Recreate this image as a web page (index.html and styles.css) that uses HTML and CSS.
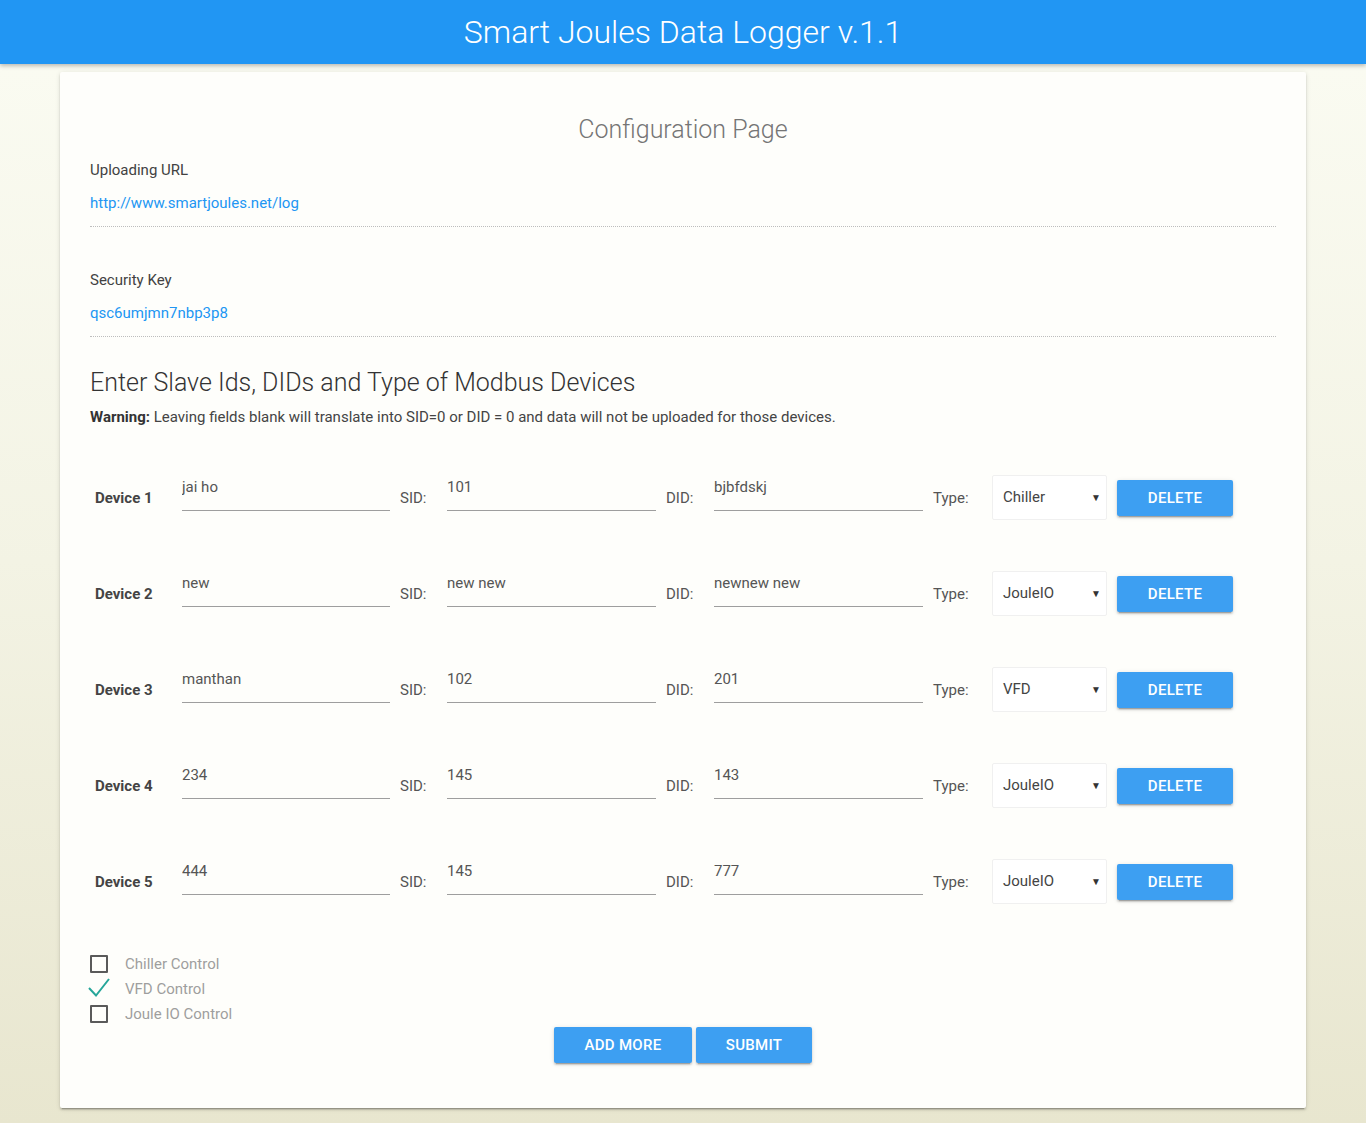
FILE: index.html
```html
<!DOCTYPE html>
<html lang="en">
<head>
<meta charset="utf-8">
<title>Smart Joules Data Logger v.1.1</title>
<link rel="stylesheet" href="styles.css">
</head>
<body>
<header class="topbar"><h1 class="topbar-title">Smart Joules Data Logger v.1.1</h1></header>
<main class="card">
  <h2 class="page-title">Configuration Page</h2>

  <section class="field-block">
    <div class="field-label">Uploading URL</div>
    <div class="field-value">http://www.smartjoules.net/log</div>
  </section>
  <hr class="dotted">

  <section class="field-block gap-top">
    <div class="field-label">Security Key</div>
    <div class="field-value">qsc6umjmn7nbp3p8</div>
  </section>
  <hr class="dotted">

  <h3 class="section-title">Enter Slave Ids, DIDs and Type of Modbus Devices</h3>
  <p class="warning"><b>Warning:</b> Leaving fields blank will translate into SID=0 or DID = 0 and data will not be uploaded for those devices.</p>

  <div class="devices">
    <div class="device-row">
      <span class="device-name">Device 1</span>
      <input class="text-input" type="text" value="jai ho">
      <span class="inline-label sid">SID:</span>
      <input class="text-input wide" type="text" value="101">
      <span class="inline-label did">DID:</span>
      <input class="text-input wide" type="text" value="bjbfdskj">
      <span class="inline-label type">Type:</span>
      <div class="select"><span>Chiller</span><span class="caret">&#9660;</span></div>
      <button class="btn btn-delete">DELETE</button>
    </div>
    <div class="device-row">
      <span class="device-name">Device 2</span>
      <input class="text-input" type="text" value="new">
      <span class="inline-label sid">SID:</span>
      <input class="text-input wide" type="text" value="new new">
      <span class="inline-label did">DID:</span>
      <input class="text-input wide" type="text" value="newnew new">
      <span class="inline-label type">Type:</span>
      <div class="select"><span>JouleIO</span><span class="caret">&#9660;</span></div>
      <button class="btn btn-delete">DELETE</button>
    </div>
    <div class="device-row">
      <span class="device-name">Device 3</span>
      <input class="text-input" type="text" value="manthan">
      <span class="inline-label sid">SID:</span>
      <input class="text-input wide" type="text" value="102">
      <span class="inline-label did">DID:</span>
      <input class="text-input wide" type="text" value="201">
      <span class="inline-label type">Type:</span>
      <div class="select"><span>VFD</span><span class="caret">&#9660;</span></div>
      <button class="btn btn-delete">DELETE</button>
    </div>
    <div class="device-row">
      <span class="device-name">Device 4</span>
      <input class="text-input" type="text" value="234">
      <span class="inline-label sid">SID:</span>
      <input class="text-input wide" type="text" value="145">
      <span class="inline-label did">DID:</span>
      <input class="text-input wide" type="text" value="143">
      <span class="inline-label type">Type:</span>
      <div class="select"><span>JouleIO</span><span class="caret">&#9660;</span></div>
      <button class="btn btn-delete">DELETE</button>
    </div>
    <div class="device-row">
      <span class="device-name">Device 5</span>
      <input class="text-input" type="text" value="444">
      <span class="inline-label sid">SID:</span>
      <input class="text-input wide" type="text" value="145">
      <span class="inline-label did">DID:</span>
      <input class="text-input wide" type="text" value="777">
      <span class="inline-label type">Type:</span>
      <div class="select"><span>JouleIO</span><span class="caret">&#9660;</span></div>
      <button class="btn btn-delete">DELETE</button>
    </div>
  </div>

  <div class="checks">
    <label class="check"><span class="box"></span><span class="check-text">Chiller Control</span></label>
    <label class="check"><span class="tick"><svg width="24" height="20" viewBox="0 0 24 20"><polyline points="1,10 8,17.5 21,1" fill="none" stroke="#26a69a" stroke-width="2"/></svg></span><span class="check-text">VFD Control</span></label>
    <label class="check"><span class="box"></span><span class="check-text">Joule IO Control</span></label>
  </div>

  <div class="actions">
    <button class="btn btn-add">ADD MORE</button>
    <button class="btn btn-submit">SUBMIT</button>
  </div>
</main>
</body>
</html>
```
FILE: styles.css
```css
html, body {
  margin: 0;
  padding: 0;
}
body {
  font-family: Roboto, "Noto Sans", sans-serif;
  background: linear-gradient(to bottom, #fbfcf3 0%, #f3f3e4 50%, #e8e6cf 100%);
  min-height: 1123px;
  color: #444;
  overflow: hidden;
}
.topbar {
  height: 64px;
  background: #2196f3;
  box-shadow: 0 2px 4px rgba(0,0,0,0.25);
  display: flex;
  align-items: center;
  justify-content: center;
  position: relative;
  z-index: 2;
}
.topbar-title {
  margin: 0;
  color: #fff;
  font-weight: 300;
  font-size: 32px;
  line-height: 64px;
}
.card {
  margin: 8px 60px 15px;
  background: #fefefb;
  padding: 30px 30px 45px;
  box-shadow: 0 2px 2px rgba(0,0,0,0.14), 0 1px 5px rgba(0,0,0,0.12), 0 3px 1px -2px rgba(0,0,0,0.2);
  border-radius: 2px;
  height: 961px;
}
.page-title {
  margin: 12px 0 0;
  text-align: center;
  font-size: 25px;
  line-height: 32px;
  font-weight: 300;
  color: #757575;
}
.field-block {
  padding-top: 14px;
}
.field-block.gap-top {
  padding-top: 43px;
}
.field-label {
  font-size: 15px;
  line-height: 20px;
  color: #424242;
}
.field-value {
  margin-top: 13px;
  font-size: 15px;
  line-height: 20px;
  color: #2196f3;
}
.dotted {
  border: 0;
  border-top: 1px dotted #bdbdbd;
  margin: 13px 0 0;
  height: 0;
}
.section-title {
  margin: 30px 0 0;
  font-size: 25px;
  line-height: 32px;
  font-weight: 300;
  color: #333;
}
.warning {
  margin: 8px 0 0;
  font-size: 15px;
  line-height: 20px;
  color: #444;
}
.warning b {
  font-weight: 700;
  color: #333;
}
.devices {
  margin-top: 22px;
}
.device-row {
  height: 96px;
  display: flex;
  align-items: center;
  gap: 10px;
}
.device-name {
  width: 77px;
  padding-left: 5px;
  font-weight: 700;
  font-size: 15px;
  color: #444;
  margin-top: 1px;
}
.text-input {
  box-sizing: border-box;
  width: 208px;
  height: 45px;
  margin: 0 0 18px;
  padding: 0 0 1px;
  border: 0;
  border-bottom: 1px solid #9e9e9e;
  background: transparent;
  font-family: Roboto, "Noto Sans", sans-serif;
  font-size: 15px;
  color: #555;
  outline: none;
}
.text-input.wide {
  width: 209px;
}
.inline-label {
  font-size: 15px;
  color: #555;
  margin-top: 2px;
}
.inline-label.sid { width: 37px; }
.inline-label.did { width: 38px; }
.inline-label.type { width: 49px; }
.select {
  box-sizing: border-box;
  width: 115px;
  height: 45px;
  border: 1px solid #f0f0f0;
  border-radius: 2px;
  background: #fff;
  display: flex;
  align-items: center;
  justify-content: space-between;
  padding: 0 5px 0 10px;
  font-size: 15px;
  color: #444;
}
.caret {
  font-size: 10px;
  color: #333;
}
.btn {
  box-sizing: border-box;
  height: 36px;
  border: 0;
  border-radius: 2px;
  background: #3d9ff2;
  color: #fff;
  font-family: Roboto, "Noto Sans", sans-serif;
  font-size: 15px;
  font-weight: 500;
  letter-spacing: 0.3px;
  padding: 0;
  box-shadow: 0 2px 2px rgba(0,0,0,0.14), 0 1px 5px rgba(0,0,0,0.12), 0 3px 1px -2px rgba(0,0,0,0.2);
  cursor: pointer;
}
.btn-delete { width: 116px; margin-top: 1px; }
.btn-add { width: 138px; }
.btn-submit { width: 116px; }
.checks {
  margin-top: 22px;
  display: flex;
  flex-direction: column;
}
.check {
  display: flex;
  align-items: center;
  height: 25px;
  position: relative;
}
.box {
  box-sizing: border-box;
  width: 18px;
  height: 18px;
  border: 2px solid #5a5a5a;
  border-radius: 1px;
  margin-right: 17px;
}
.tick {
  width: 18px;
  height: 18px;
  margin-right: 17px;
  position: relative;
}
.tick svg {
  position: absolute;
  left: -2px;
  top: -2px;
}
.check-text {
  font-size: 15px;
  color: #9e9e9e;
}
.actions {
  display: flex;
  justify-content: center;
  gap: 4px;
  margin-top: 1px;
}
```
